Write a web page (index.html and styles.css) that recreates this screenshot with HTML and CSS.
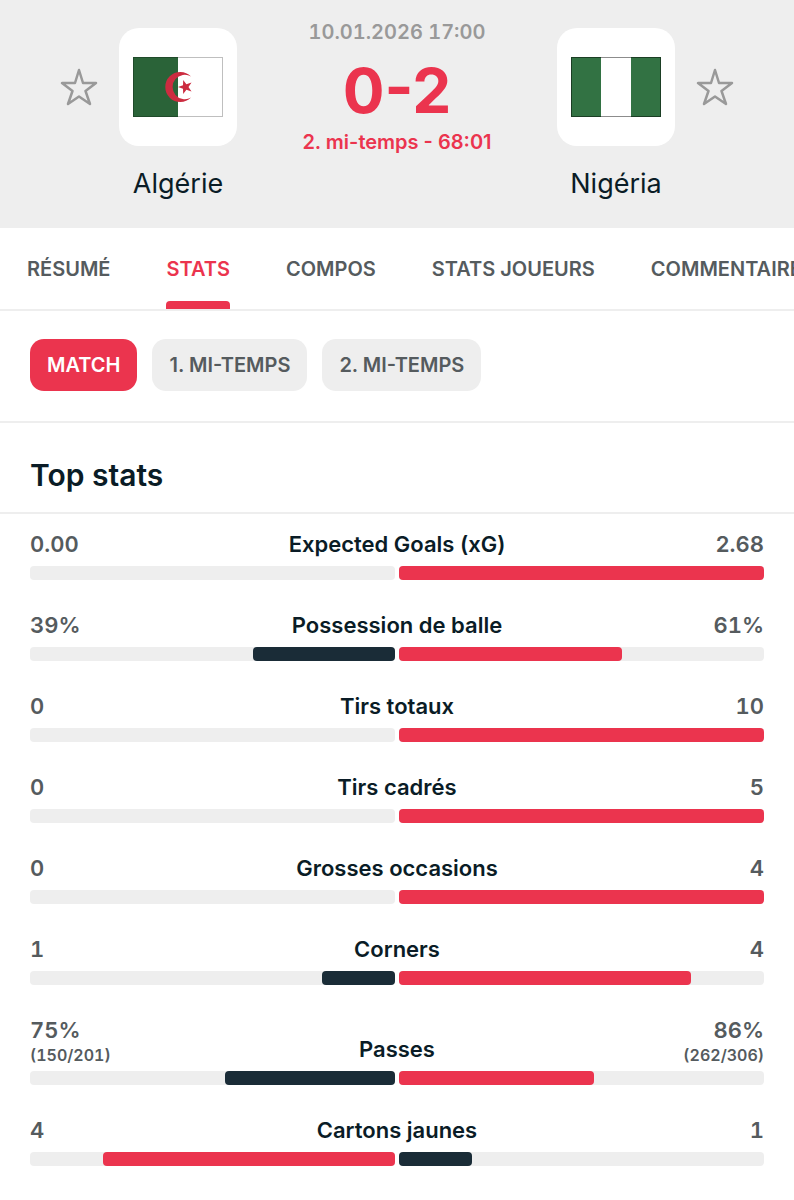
FILE: index.html
```html
<!DOCTYPE html>
<html lang="fr">
<head>
    <meta charset="UTF-8">
    <meta name="viewport" content="width=device-width, initial-scale=1.0">
    <title>Algérie - Nigéria</title>
    <link rel="stylesheet" href="styles.css">
</head>
<body>
    <header class="match-header">
        <div class="team team-home">
            <button class="star" type="button" aria-label="Suivre Algérie">
                <svg viewBox="0 0 38 38"><path d="M19 2 L23 15 H36 L25.500 23 L30 36 L19 28.500 L8 36 L12.500 23 L2 15 H15 Z"/></svg>
            </button>
            <div class="crest">
                <svg viewBox="0 0 90 60">
                    <rect width="90" height="60" fill="#fff"/>
                    <rect width="45" height="60" fill="#2a6338"/>
                    <path d="M58 19.500 A15 15 0 1 0 58 40.500 A12.200 12.200 0 1 1 58 19.500 Z" fill="#cc2c40"/>
                    <path d="M45 30 L50 28.200 L50.200 23 L53.400 27.200 L58.500 25.600 L55.500 30 L58.500 34.400 L53.400 32.800 L50.200 37 L50 31.800 Z" fill="#cc2c40"/>
                    <rect x="0.5" y="0.5" width="89" height="59" fill="none" stroke="#000" stroke-opacity="0.25"/>
                </svg>
            </div>
            <span class="team-name">Algérie</span>
        </div>

        <div class="score-box">
            <time class="date" datetime="2026-01-10T17:00">10.01.2026 17:00</time>
            <div class="score">0-2</div>
            <div class="status">2. mi-temps - 68:01</div>
        </div>

        <div class="team team-away">
            <div class="crest">
                <svg viewBox="0 0 90 60">
                    <rect width="90" height="60" fill="#327243"/>
                    <rect x="30" width="30" height="60" fill="#fff"/>
                    <rect x="0.5" y="0.5" width="89" height="59" fill="none" stroke="#000" stroke-opacity="0.45"/>
                </svg>
            </div>
            <button class="star" type="button" aria-label="Suivre Nigéria">
                <svg viewBox="0 0 38 38"><path d="M19 2 L23 15 H36 L25.500 23 L30 36 L19 28.500 L8 36 L12.500 23 L2 15 H15 Z"/></svg>
            </button>
            <span class="team-name">Nigéria</span>
        </div>
    </header>

    <nav class="tabs">
        <a href="#resume">RÉSUMÉ</a>
        <a href="#stats" class="active">STATS</a>
        <a href="#compos">COMPOS</a>
        <a href="#joueurs">STATS JOUEURS</a>
        <a href="#commentaires">COMMENTAIRES</a>
    </nav>

    <div class="filters">
        <button type="button" class="filter active">MATCH</button>
        <button type="button" class="filter">1. MI-TEMPS</button>
        <button type="button" class="filter">2. MI-TEMPS</button>
    </div>

    <main>
        <h2 class="section-title">Top stats</h2>

        <div class="stats">
            <div class="stat">
                <div class="stat-head">
                    <span class="value">0.00</span>
                    <span class="label">Expected Goals (xG)</span>
                    <span class="value">2.68</span>
                </div>
                <div class="bars">
                    <div class="bar home"><div class="fill" style="width: 0%"></div></div>
                    <div class="bar"><div class="fill lead" style="width: 100%"></div></div>
                </div>
            </div>

            <div class="stat">
                <div class="stat-head">
                    <span class="value">39%</span>
                    <span class="label">Possession de balle</span>
                    <span class="value">61%</span>
                </div>
                <div class="bars">
                    <div class="bar home"><div class="fill" style="width: 39%"></div></div>
                    <div class="bar"><div class="fill lead" style="width: 61%"></div></div>
                </div>
            </div>

            <div class="stat">
                <div class="stat-head">
                    <span class="value">0</span>
                    <span class="label">Tirs totaux</span>
                    <span class="value">10</span>
                </div>
                <div class="bars">
                    <div class="bar home"><div class="fill" style="width: 0%"></div></div>
                    <div class="bar"><div class="fill lead" style="width: 100%"></div></div>
                </div>
            </div>

            <div class="stat">
                <div class="stat-head">
                    <span class="value">0</span>
                    <span class="label">Tirs cadrés</span>
                    <span class="value">5</span>
                </div>
                <div class="bars">
                    <div class="bar home"><div class="fill" style="width: 0%"></div></div>
                    <div class="bar"><div class="fill lead" style="width: 100%"></div></div>
                </div>
            </div>

            <div class="stat">
                <div class="stat-head">
                    <span class="value">0</span>
                    <span class="label">Grosses occasions</span>
                    <span class="value">4</span>
                </div>
                <div class="bars">
                    <div class="bar home"><div class="fill" style="width: 0%"></div></div>
                    <div class="bar"><div class="fill lead" style="width: 100%"></div></div>
                </div>
            </div>

            <div class="stat">
                <div class="stat-head">
                    <span class="value">1</span>
                    <span class="label">Corners</span>
                    <span class="value">4</span>
                </div>
                <div class="bars">
                    <div class="bar home"><div class="fill" style="width: 20%"></div></div>
                    <div class="bar"><div class="fill lead" style="width: 80%"></div></div>
                </div>
            </div>

            <div class="stat">
                <div class="stat-head">
                    <span class="value">75% <small>(150/201)</small></span>
                    <span class="label">Passes</span>
                    <span class="value">86% <small>(262/306)</small></span>
                </div>
                <div class="bars">
                    <div class="bar home"><div class="fill" style="width: 46.6%"></div></div>
                    <div class="bar"><div class="fill lead" style="width: 53.4%"></div></div>
                </div>
            </div>

            <div class="stat">
                <div class="stat-head">
                    <span class="value">4</span>
                    <span class="label">Cartons jaunes</span>
                    <span class="value">1</span>
                </div>
                <div class="bars">
                    <div class="bar home"><div class="fill lead" style="width: 80%"></div></div>
                    <div class="bar"><div class="fill" style="width: 20%"></div></div>
                </div>
            </div>
        </div>
    </main>
</body>
</html>
```
FILE: styles.css
```css
* {
    box-sizing: border-box;
}
body {
    margin: 0;
    background: #fff;
    color: #0a1c26;
    font-family: Inter, Roboto, sans-serif;
}
button {
    border: none;
    padding: 0;
    background: none;
    font: inherit;
    cursor: pointer;
}

/* Match header */
.match-header {
    display: flex;
    justify-content: space-between;
    padding: 28px 60px;
    background: #eee;
}
.team {
    display: grid;
    grid-template-columns: 38px 118px;
    column-gap: 21px;
    row-gap: 22px;
    align-items: center;
}
.team-away {
    grid-template-columns: 118px 38px;
}
.star svg {
    display: block;
    width: 38px;
    height: 38px;
    fill: none;
    stroke: #999;
    stroke-width: 2.5;
    stroke-linejoin: round;
}
.crest {
    display: flex;
    align-items: center;
    justify-content: center;
    height: 118px;
    background: #fff;
    border-radius: 20px;
}
.crest svg {
    width: 90px;
    height: 60px;
}
.team-name {
    grid-column: 2;
    font-size: 27px;
    line-height: 32px;
    text-align: center;
}
.team-away .team-name {
    grid-column: 1;
}
.score-box {
    display: flex;
    flex-direction: column;
    align-items: center;
    margin-top: -8px;
    font-size: 20px;
    font-weight: 600;
    line-height: 24px;
}
.date {
    color: #999;
    font-variant-numeric: tabular-nums;
}
.score {
    margin: 22px 0 14px;
    color: #eb344e;
    font-size: 62px;
    font-weight: 700;
    line-height: 50px;
}
.status {
    color: #eb344e;
}

/* Tabs */
.tabs {
    display: flex;
    gap: 56px;
    padding: 0 27px;
    border-bottom: 2px solid #eee;
    overflow-x: auto;
    scrollbar-width: none;
}
.tabs a {
    flex: none;
    padding-top: 29px;
    color: #555b5e;
    font-size: 20px;
    font-weight: 600;
    line-height: 24px;
    text-decoration: none;
}
.tabs a::after {
    content: "";
    display: block;
    height: 8px;
    margin-top: 20px;
    border-radius: 4px 4px 0 0;
}
.tabs .active {
    color: #eb344e;
}
.tabs .active::after {
    background: #eb344e;
}

/* Period filters */
.filters {
    display: flex;
    gap: 15px;
    padding: 28px 30px 30px;
    border-bottom: 2px solid #eee;
}
.filter {
    height: 52px;
    padding: 0 17px;
    border-radius: 14px;
    background: #eee;
    color: #555b5e;
    font-size: 20px;
    font-weight: 600;
}
.filter.active {
    background: #eb344e;
    color: #fff;
}

/* Stats */
.section-title {
    margin: 0;
    padding: 34px 30px 19px;
    border-bottom: 2px solid #eee;
    font-size: 30px;
    font-weight: 600;
    line-height: 36px;
}
.stats {
    display: flex;
    flex-direction: column;
    gap: 31px;
    padding: 16px 30px 32px;
}
.stat-head {
    display: grid;
    grid-template-columns: 1fr auto 1fr;
    min-height: 32px;
    margin-bottom: 4px;
    line-height: 28px;
}
.value {
    color: #555b5e;
    font-size: 22px;
    font-weight: 600;
    font-variant-numeric: tabular-nums;
}
.value:last-child {
    text-align: right;
}
.value small {
    display: block;
    font-size: 16px;
    line-height: 23px;
}
.label {
    align-self: end;
    padding-bottom: 4px;
    font-size: 22px;
    font-weight: 600;
}
.bars {
    display: grid;
    grid-template-columns: 1fr 1fr;
    gap: 4px;
}
.bar {
    display: flex;
    height: 14px;
    background: #eee;
    border-radius: 4px;
}
.bar.home {
    justify-content: flex-end;
}
.fill {
    background: #1a2c37;
    border-radius: 4px;
}
.fill.lead {
    background: #eb344e;
}
```
